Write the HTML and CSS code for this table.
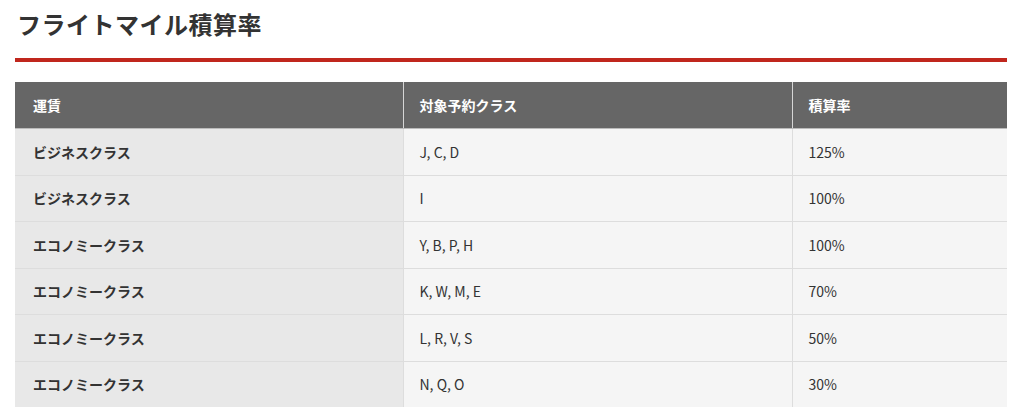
FILE: index.html
```html
<!DOCTYPE html>
<html lang="ja">
<head>
<meta charset="utf-8">
<title>フライトマイル積算率</title>
<link rel="stylesheet" href="styles.css">
</head>
<body>
<section class="mile-section">
  <h2 class="mile-title">フライトマイル積算率</h2>
  <table class="mile-table">
    <thead>
      <tr>
        <th class="col-fare">運賃</th>
        <th class="col-class">対象予約クラス</th>
        <th class="col-rate">積算率</th>
      </tr>
    </thead>
    <tbody>
      <tr><th>ビジネスクラス</th><td>J, C, D</td><td>125%</td></tr>
      <tr><th>ビジネスクラス</th><td>I</td><td>100%</td></tr>
      <tr><th>エコノミークラス</th><td>Y, B, P, H</td><td>100%</td></tr>
      <tr><th>エコノミークラス</th><td>K, W, M, E</td><td>70%</td></tr>
      <tr><th>エコノミークラス</th><td>L, R, V, S</td><td>50%</td></tr>
      <tr><th>エコノミークラス</th><td>N, Q, O</td><td>30%</td></tr>
    </tbody>
  </table>
</section>
</body>
</html>
```
FILE: styles.css
```css
html, body {
  margin: 0;
  padding: 0;
  background: #fff;
}
body {
  font-family: "Noto Sans CJK JP", "Noto Sans", sans-serif;
  color: #333;
}
.mile-section {
  padding: 6px 17px 0 15px;
}
.mile-title {
  margin: 0;
  padding: 0 0 16px 2px;
  font-size: 24px;
  letter-spacing: 0.5px;
  line-height: 36px;
  font-weight: bold;
  color: #333;
  border-bottom: 4px solid #c0261d;
}
.mile-table {
  margin-top: 20px;
  width: 100%;
  border-collapse: collapse;
  font-size: 14px;
}
.mile-table thead th {
  background: #666;
  color: #fff;
  font-weight: bold;
  text-align: left;
  height: 46px;
  padding: 0 16px;
  border-right: 1px solid #d6d6d6;
  border-bottom: 1px solid #bbb;
}
.mile-table thead th:last-child {
  border-right: none;
}
.mile-table th.col-fare { width: 388px; box-sizing: border-box; padding-left: 18px; }
.mile-table th.col-class { width: 389px; box-sizing: border-box; }
.mile-table tbody th,
.mile-table tbody td {
  height: 45.5px;
  padding: 0 16px;
  text-align: left;
  border-bottom: 1px solid #ddd;
  border-right: 1px solid #ddd;
}
.mile-table tbody tr:last-child th,
.mile-table tbody tr:last-child td {
  border-bottom: none;
}
.mile-table tbody th {
  background: #e8e8e8;
  font-weight: bold;
  padding-left: 18px;
  color: #333;
}
.mile-table tbody td {
  background: #f5f5f5;
  font-weight: normal;
  color: #333;
}
.mile-table tbody td:last-child {
  border-right: none;
}
```
